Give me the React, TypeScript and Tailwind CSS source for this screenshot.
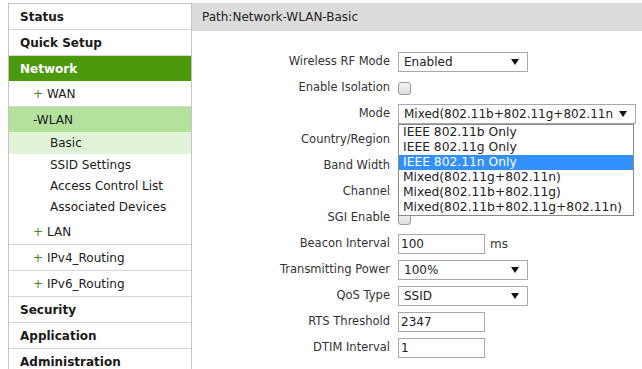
import React from "react";

const Arrow = () => (
  <svg width="8" height="6" viewBox="0 0 8 6" className="shrink-0">
    <polygon points="0,0 8,0 4,6" fill="#111" />
  </svg>
);

const Select = ({ value, width }: { value: string; width: string }) => (
  <div
    className={`${width} h-[20px] border border-[#a9a9a9] bg-white flex items-center pl-[5px] pr-[8px] gap-[5px]`}
  >
    <span className="flex-1 min-w-0 overflow-hidden whitespace-nowrap text-[#222]">{value}</span>
    <Arrow />
  </div>
);

const Input = ({ value }: { value: string }) => (
  <div className="w-[87px] h-[20px] border border-[#a9a9a9] bg-white flex items-center pl-[2px] text-[#222]">
    {value}
  </div>
);

const Checkbox = () => (
  <div className="w-[13px] h-[13px] rounded-[3px] border border-[#9a9a9a] bg-gradient-to-b from-[#f4f4f4] to-[#dedede]" />
);

const Plus = () => <span className="text-[#3f8a1c] mr-[4px]">+</span>;

const modeOptions = [
  "IEEE 802.11b Only",
  "IEEE 802.11g Only",
  "IEEE 802.11n Only",
  "Mixed(802.11g+802.11n)",
  "Mixed(802.11b+802.11g)",
  "Mixed(802.11b+802.11g+802.11n)",
];

const Sidebar = () => (
  <aside className="w-[184px] shrink-0 border-l border-t border-r border-[#c4c4c4] text-[12px] text-[#1a1a1a]">
    <div className="h-[26px] border-b border-[#d6d6d6] flex items-center pl-[11px] font-bold">Status</div>
    <div className="h-[26px] border-b border-[#d6d6d6] flex items-center pl-[11px] font-bold">Quick Setup</div>
    <div className="h-[25px] bg-[#4a9a0b] text-white flex items-center pl-[11px] font-bold">Network</div>
    <div className="h-[26px] border-b border-[#d6d6d6] flex items-center pl-[24px]">
      <Plus />WAN
    </div>
    <div className="h-[25px] bg-[#b3e29d] flex items-center pl-[24px]">-WLAN</div>
    <div className="pb-[2px]">
      <div className="h-[22px] bg-[#e2f4d7] flex items-center pl-[41px]">Basic</div>
      <div className="h-[21px] flex items-center pl-[41px]">SSID Settings</div>
      <div className="h-[21px] flex items-center pl-[41px]">Access Control List</div>
      <div className="h-[21px] flex items-center pl-[41px]">Associated Devices</div>
    </div>
    <div className="h-[26px] border-b border-[#d6d6d6] flex items-center pl-[24px]">
      <Plus />LAN
    </div>
    <div className="h-[26px] border-b border-[#d6d6d6] flex items-center pl-[24px]">
      <Plus />IPv4_Routing
    </div>
    <div className="h-[26px] border-b border-[#d6d6d6] flex items-center pl-[24px]">
      <Plus />IPv6_Routing
    </div>
    <div className="h-[26px] border-b border-[#d6d6d6] flex items-center pl-[11px] font-bold">Security</div>
    <div className="h-[26px] border-b border-[#d6d6d6] flex items-center pl-[11px] font-bold">Application</div>
    <div className="h-[26px] flex items-center pl-[11px] font-bold">Administration</div>
  </aside>
);

const Row = ({ label, children }: { label: string; children?: React.ReactNode }) => (
  <div className="h-[26px] flex items-center">
    <div className="w-[198px] text-right text-[11.5px] text-[#333]">{label}</div>
    <div className="ml-[8px] flex items-center">{children}</div>
  </div>
);

export default function App() {
  return (
    <div className="w-[642px] h-[369px] overflow-hidden bg-white pt-[3px] pl-[8px] flex font-['DejaVu_Sans',sans-serif] text-[12px]">
      <Sidebar />
      <main className="flex-1 flex flex-col">
        <div className="h-[28px] bg-[#dcdcdc] flex items-center pl-[10px] text-[#222]">Path:Network-WLAN-Basic</div>
        <div className="pt-[18px] relative">
          <Row label="Wireless RF Mode">
            <Select value="Enabled" width="w-[130px]" />
          </Row>
          <Row label="Enable Isolation">
            <Checkbox />
          </Row>
          <Row label="Mode">
            <div className="relative">
              <Select value="Mixed(802.11b+802.11g+802.11n)" width="w-[238px]" />
              <div className="absolute left-0 top-[20px] w-[236px] border border-[#8a8a8a] bg-white z-10 text-[12.3px]">
                {modeOptions.map((o, i) => (
                  <div
                    key={o}
                    className={`h-[15px] leading-[15px] pl-[4px] whitespace-nowrap ${
                      i === 2 ? "bg-[#3390ff] text-white" : "text-[#222]"
                    }`}
                  >
                    {o}
                  </div>
                ))}
              </div>
            </div>
          </Row>
          <Row label="Country/Region">
            <Select value="" width="w-[130px]" />
          </Row>
          <Row label="Band Width">
            <Select value="" width="w-[130px]" />
          </Row>
          <Row label="Channel">
            <Select value="" width="w-[130px]" />
          </Row>
          <Row label="SGI Enable">
            <Checkbox />
          </Row>
          <Row label="Beacon Interval">
            <Input value="100" />
            <span className="ml-[5px] text-[#333]">ms</span>
          </Row>
          <Row label="Transmitting Power">
            <Select value="100%" width="w-[130px]" />
          </Row>
          <Row label="QoS Type">
            <Select value="SSID" width="w-[130px]" />
          </Row>
          <Row label="RTS Threshold">
            <Input value="2347" />
          </Row>
          <Row label="DTIM Interval">
            <Input value="1" />
          </Row>
        </div>
      </main>
    </div>
  );
}
